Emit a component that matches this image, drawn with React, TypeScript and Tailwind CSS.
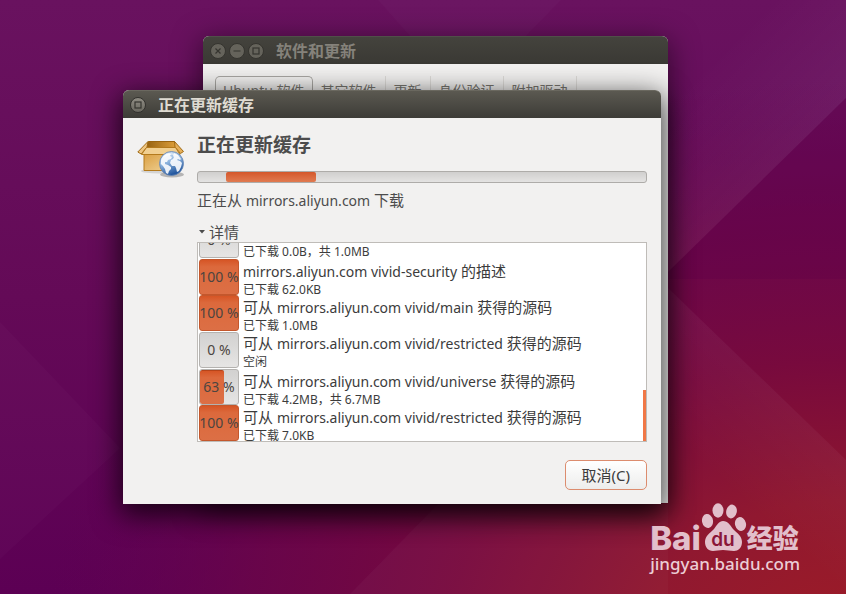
interface Download {
  id: number;
  percent: number;
  before?: string;
  source: string;
  after: string;
  status: string;
}

const downloads: Download[] = [
  { id: 1, percent: 0, before: "可从", source: "mirrors.aliyun.com vivid/main", after: "获得的源码", status: "已下载 0.0B，共 1.0MB" },
  { id: 2, percent: 100, source: "mirrors.aliyun.com vivid-security", after: "的描述", status: "已下载 62.0KB" },
  { id: 3, percent: 100, before: "可从", source: "mirrors.aliyun.com vivid/main", after: "获得的源码", status: "已下载 1.0MB" },
  { id: 4, percent: 0, before: "可从", source: "mirrors.aliyun.com vivid/restricted", after: "获得的源码", status: "空闲" },
  { id: 5, percent: 63, before: "可从", source: "mirrors.aliyun.com vivid/universe", after: "获得的源码", status: "已下载 4.2MB，共 6.7MB" },
  { id: 6, percent: 100, before: "可从", source: "mirrors.aliyun.com vivid/restricted", after: "获得的源码", status: "已下载 7.0KB" },
];

const tabs = ["Ubuntu 软件", "其它软件", "更新", "身份验证", "附加驱动"];

function Wallpaper() {
  return (
    <svg className="absolute inset-0 h-full w-full" viewBox="0 0 846 594" preserveAspectRatio="none" aria-hidden="true">
      <defs>
        <linearGradient id="base" x1="0" y1="0" x2="0" y2="1">
          <stop offset="0" stopColor="#69125f" />
          <stop offset="0.5" stopColor="#640a57" />
          <stop offset="1" stopColor="#5c0054" />
        </linearGradient>
        <radialGradient id="glow" cx="0" cy="0" r="1" gradientUnits="userSpaceOnUse" gradientTransform="translate(846 640) scale(800 560)">
          <stop offset="0" stopColor="#9c1a24" />
          <stop offset="0.25" stopColor="#8f162e" />
          <stop offset="0.5" stopColor="#790a3c" stopOpacity="0.95" />
          <stop offset="0.75" stopColor="#6c0647" stopOpacity="0.75" />
          <stop offset="1" stopColor="#620250" stopOpacity="0" />
        </radialGradient>
        <linearGradient id="upperFacet" gradientUnits="userSpaceOnUse" x1="757" y1="185" x2="672" y2="98">
          <stop offset="0" stopColor="#fff" stopOpacity="0.05" />
          <stop offset="1" stopColor="#fff" stopOpacity="0" />
        </linearGradient>
        <linearGradient id="lowerFacet" gradientUnits="userSpaceOnUse" x1="757" y1="376" x2="690" y2="450">
          <stop offset="0" stopColor="#fff" stopOpacity="0.04" />
          <stop offset="1" stopColor="#fff" stopOpacity="0.01" />
        </linearGradient>
      </defs>
      <rect width="846" height="594" fill="url(#base)" />
      <rect width="846" height="594" fill="url(#glow)" />
      <path d="M378 0 410 36H526L561 0Z" fill="#fff" opacity="0.02" />
      <path d="M846 98 668 272V0H846Z" fill="url(#upperFacet)" />
      <path d="M846 98 668 272V279H846Z" fill="#60004a" opacity="0.3" />
      <path d="M668 288 846 460V594H668Z" fill="url(#lowerFacet)" />
      <path d="M0 322 120 448 0 559Z" fill="#fff" opacity="0.02" />
      <path d="M350 594 438 504H668V594Z" fill="#fff" opacity="0.03" />
    </svg>
  );
}

type WindowAction = "close" | "minimize" | "maximize";

const actionLabels = { close: "关闭", minimize: "最小化", maximize: "最大化" };

function WindowButton({ action, active }: Readonly<{ action: WindowAction; active?: boolean }>) {
  return (
    <button
      type="button"
      aria-label={actionLabels[action]}
      className={
        active
          ? "h-4 w-4 rounded-full border border-[#33322e] bg-linear-to-b from-[#8f8c83] to-[#69675f]"
          : "h-4 w-4 rounded-full border border-[#35342f] bg-[#65635b]"
      }
    >
      <svg viewBox="0 0 14 14" className="h-full w-full" fill="none" stroke="#35342f" strokeWidth="1.2">
        {action === "close" && <path d="M4.5 4.5 9.5 9.5M9.5 4.5 4.5 9.5" />}
        {action === "minimize" && <path d="M3.5 7H10.5" />}
        {action === "maximize" && <rect x="4" y="4" width="6" height="6" />}
      </svg>
    </button>
  );
}

function SettingsWindow() {
  return (
    <section className="absolute top-9 left-[203px] flex h-[467px] w-[465px] flex-col overflow-hidden rounded-t-md bg-[#f2f1f0] shadow-[0_6px_28px_2px_rgba(0,0,0,0.5)]">
      <header className="flex h-7 shrink-0 items-center gap-[3px] border-t border-[#504f49] bg-linear-to-b from-[#44433d] to-[#3a3934] px-[7px]">
        <WindowButton action="close" />
        <WindowButton action="minimize" />
        <WindowButton action="maximize" />
        <h2 className="ml-[9px] text-base leading-6 font-bold text-[#85827b]">软件和更新</h2>
      </header>
      <div role="tablist" className="flex px-3 pt-3 text-sm leading-5 whitespace-nowrap text-[#77756f]">
        {tabs.map((tab, index) => (
          <button
            key={tab}
            type="button"
            role="tab"
            aria-selected={index === 0}
            className={
              index === 0
                ? "rounded-t-[5px] border border-b-0 border-[#a9a7a3] px-[7px] py-1"
                : "border-r border-[#dddbd8] px-2 py-1"
            }
          >
            {tab}
          </button>
        ))}
      </div>
    </section>
  );
}

function PackageIcon() {
  return (
    <svg viewBox="0 0 48 48" className="h-12 w-12 shrink-0 overflow-visible" aria-hidden="true">
      <defs>
        <linearGradient id="boxFront" x1="0" y1="0" x2="1" y2="1">
          <stop offset="0" stopColor="#d99c3c" />
          <stop offset="1" stopColor="#f3d9a2" />
        </linearGradient>
        <linearGradient id="boxInside" x1="0" y1="0" x2="1" y2="0">
          <stop offset="0" stopColor="#94600f" />
          <stop offset="1" stopColor="#e0a13c" />
        </linearGradient>
        <linearGradient id="sea" x1="0" y1="0" x2="0.4" y2="1">
          <stop offset="0" stopColor="#e4effa" />
          <stop offset="0.5" stopColor="#8fb5de" />
          <stop offset="1" stopColor="#24589f" />
        </linearGradient>
      </defs>
      <ellipse cx="22" cy="37" rx="18" ry="2.5" fill="#000" opacity="0.12" />
      <ellipse cx="35" cy="40.5" rx="12" ry="3" fill="#000" opacity="0.25" />
      <path d="M7 18H41V36.5H7Z" fill="url(#boxFront)" stroke="#b47a1c" />
      <path d="M11.5 7.5H37.5L40.5 14H8.5Z" fill="url(#boxInside)" stroke="#9a6410" />
      <path d="M11 7.5 0.8 18 4.2 20 10 13Z" fill="#efc681" stroke="#a06a14" strokeLinejoin="round" />
      <path d="M37.5 7.5 46.5 17.5 43.5 19.5 38 13Z" fill="#e6b05a" stroke="#a06a14" strokeLinejoin="round" />
      <path d="M9.5 13.5H38.5L43 20.5H4.5Z" fill="#f1cf90" stroke="#b47a1c" strokeLinejoin="round" />
      <circle cx="34.5" cy="29.5" r="12" fill="url(#sea)" stroke="#5f82b3" strokeWidth="0.8" />
      <path
        d="M24 26c1-3 3-5 5-6l3-1 2 1-1 2 2 1-1 2-3 1-1 2-2 0 0 2 3 1 3 2 0 2-2 2-1 3-2-1-1-4-2-3-2-2ZM37 19l4 2 3 4-1 1-2-1-1 1 3 1 2 2-1 4-2 4-2 1-1-4-1-2-3 0-2-3 1-3 2-1 1-2-1-1Z"
        fill="#fbfcfe"
        opacity="0.9"
      />
      <path d="M27 23a11 11 0 0 1 14-1" fill="none" stroke="#fff" strokeWidth="1.5" opacity="0.5" />
    </svg>
  );
}

function PercentCell({ percent }: Readonly<{ percent: number }>) {
  return (
    <div
      role="progressbar"
      aria-label="下载进度"
      aria-valuenow={percent}
      className={
        percent === 100
          ? "flex h-9 w-10 shrink-0 items-center justify-center rounded-[3px] border border-[#c4572c] bg-linear-to-b from-[#d65525] via-[#dc693c] via-20% to-[#dc6f45]"
          : "relative flex h-9 w-10 shrink-0 items-center justify-center overflow-hidden rounded-[3px] border border-[#b4b2af] bg-linear-to-b from-[#d2d1d0] to-[#e6e5e4]"
      }
    >
      {percent > 0 && percent < 100 && (
        <div
          className="absolute inset-y-0 left-0 rounded-[2px] border-t border-[#b5441a] bg-linear-to-b from-[#d65525] via-[#dc693c] via-20% to-[#dc6f45]"
          style={{ width: `${percent}%` }}
        />
      )}
      <span className="relative text-sm whitespace-nowrap text-[#4c4540]">{percent} %</span>
    </div>
  );
}

function DownloadRow({ item }: Readonly<{ item: Download }>) {
  return (
    <li className={item.percent === 0 ? "flex h-[38px] shrink-0 gap-1" : "flex h-9 shrink-0 gap-1"}>
      <div className={item.percent === 0 ? "pt-px" : ""}>
        <PercentCell percent={item.percent} />
      </div>
      <div className="whitespace-nowrap text-[#3c3c3c]">
        <p className="text-[15px] leading-6">
          {item.before} <span className="text-sm leading-6">{item.source}</span> {item.after}
        </p>
        <p className="text-xs leading-3">{item.status}</p>
      </div>
    </li>
  );
}

function UpdateDialog() {
  return (
    <section
      role="dialog"
      aria-labelledby="dialog-title"
      className="absolute top-[90px] left-[123px] w-[538px] rounded-t-md bg-[#f2f1f0] shadow-[0_8px_28px_3px_rgba(0,0,0,0.75)]"
    >
      <header className="flex h-7 items-center rounded-t-md border-t border-[#6a685f] bg-linear-to-b from-[#5b5951] to-[#3d3c37] px-[7px]">
        <WindowButton action="maximize" active />
        <h1 id="dialog-title" className="ml-3 text-base leading-6 font-bold text-[#dfdbd2]">
          正在更新缓存
        </h1>
      </header>

      <div className="flex gap-3 px-3.5 pt-4 pb-3.5">
        <PackageIcon />
        <div className="flex min-w-0 flex-1 flex-col text-[15px] text-[#4c4c4c]">
          <h2 className="text-[19px] leading-[22px] font-bold">正在更新缓存</h2>

          <div
            role="progressbar"
            aria-label="正在更新缓存"
            className="mt-[15px] h-3 overflow-hidden rounded-[3px] border border-[#aeaca9] bg-linear-to-b from-[#d0cfce] to-[#e4e3e2] px-7"
          >
            <div className="h-full w-[90px] rounded-[2px] bg-linear-to-b from-[#d4572a] to-[#e07a50]" />
          </div>

          <p className="mt-[7px] leading-5">
            正在从 <span className="text-sm">mirrors.aliyun.com</span> 下载
          </p>

          <button type="button" aria-expanded="true" className="mt-[11px] flex items-center gap-1 self-start pl-0.5 leading-5">
            <svg viewBox="0 0 6 4" className="h-1 w-1.5" aria-hidden="true">
              <path d="M0 0H6L3 3.5Z" fill="#4c4c4c" />
            </svg>
            详情
          </button>

          <div className="relative h-[200px] overflow-hidden border border-[#bfbcb8] bg-white">
            <ul className="flex h-full flex-col justify-end pl-px">
              {downloads.map((item) => (
                <DownloadRow key={item.id} item={item} />
              ))}
            </ul>
            <div className="absolute right-0 bottom-0 h-[51px] w-[3px] bg-[#f07746]" />
          </div>

          <button
            type="button"
            className="mt-[18px] h-[30px] self-end rounded-[5px] border border-[#dc8c6e] bg-linear-to-b from-white to-[#ededec] px-4 leading-5 text-[#3c3c3c]"
          >
            取消(C)
          </button>
        </div>
      </div>
    </section>
  );
}

function Watermark() {
  return (
    <div className="absolute right-[46px] bottom-[18px] text-[#e2bfcb]">
      <div className="flex items-end">
        <span className="font-['Inter',sans-serif] text-[33px] leading-7 font-extrabold">Bai</span>
        <svg viewBox="0 0 46 50" className="h-[50px] w-[46px]" fill="currentColor" aria-hidden="true">
          <ellipse cx="6.5" cy="19" rx="5.5" ry="7" transform="rotate(-10 6.5 19)" />
          <ellipse cx="17" cy="8.5" rx="5.5" ry="7.2" />
          <ellipse cx="30.5" cy="9.5" rx="5.3" ry="7" transform="rotate(12 30.5 9.5)" />
          <ellipse cx="39.500" cy="22" rx="5.5" ry="7" transform="rotate(-14 39.500 22)" />
          <path d="M22 19c5 0 7 4 10 8 4 4 9 7 9 13 0 6-4 9-8 9-4 0-7-1-11-1s-7 1-10 1c-5 0-8-4-8-9 0-6 5-9 9-13 3-4 5-8 9-8Z" />
          <text x="22" y="44" textAnchor="middle" fill="#8a1638" fontFamily="Inter, sans-serif" fontSize="19" fontWeight="600">
            du
          </text>
        </svg>
        <span className="text-[26px] leading-7 font-black">经验</span>
      </div>
      <p className="text-[17px] leading-6 font-medium text-[#eccdd5]">jingyan.baidu.com</p>
    </div>
  );
}

export default function App() {
  return (
    <main
      lang="zh-CN"
      className="relative min-h-screen overflow-hidden bg-[#650b57] font-['Noto_Sans','Noto_Sans_CJK_SC',sans-serif]"
    >
      <Wallpaper />
      <SettingsWindow />
      <UpdateDialog />
      <Watermark />
    </main>
  );
}
